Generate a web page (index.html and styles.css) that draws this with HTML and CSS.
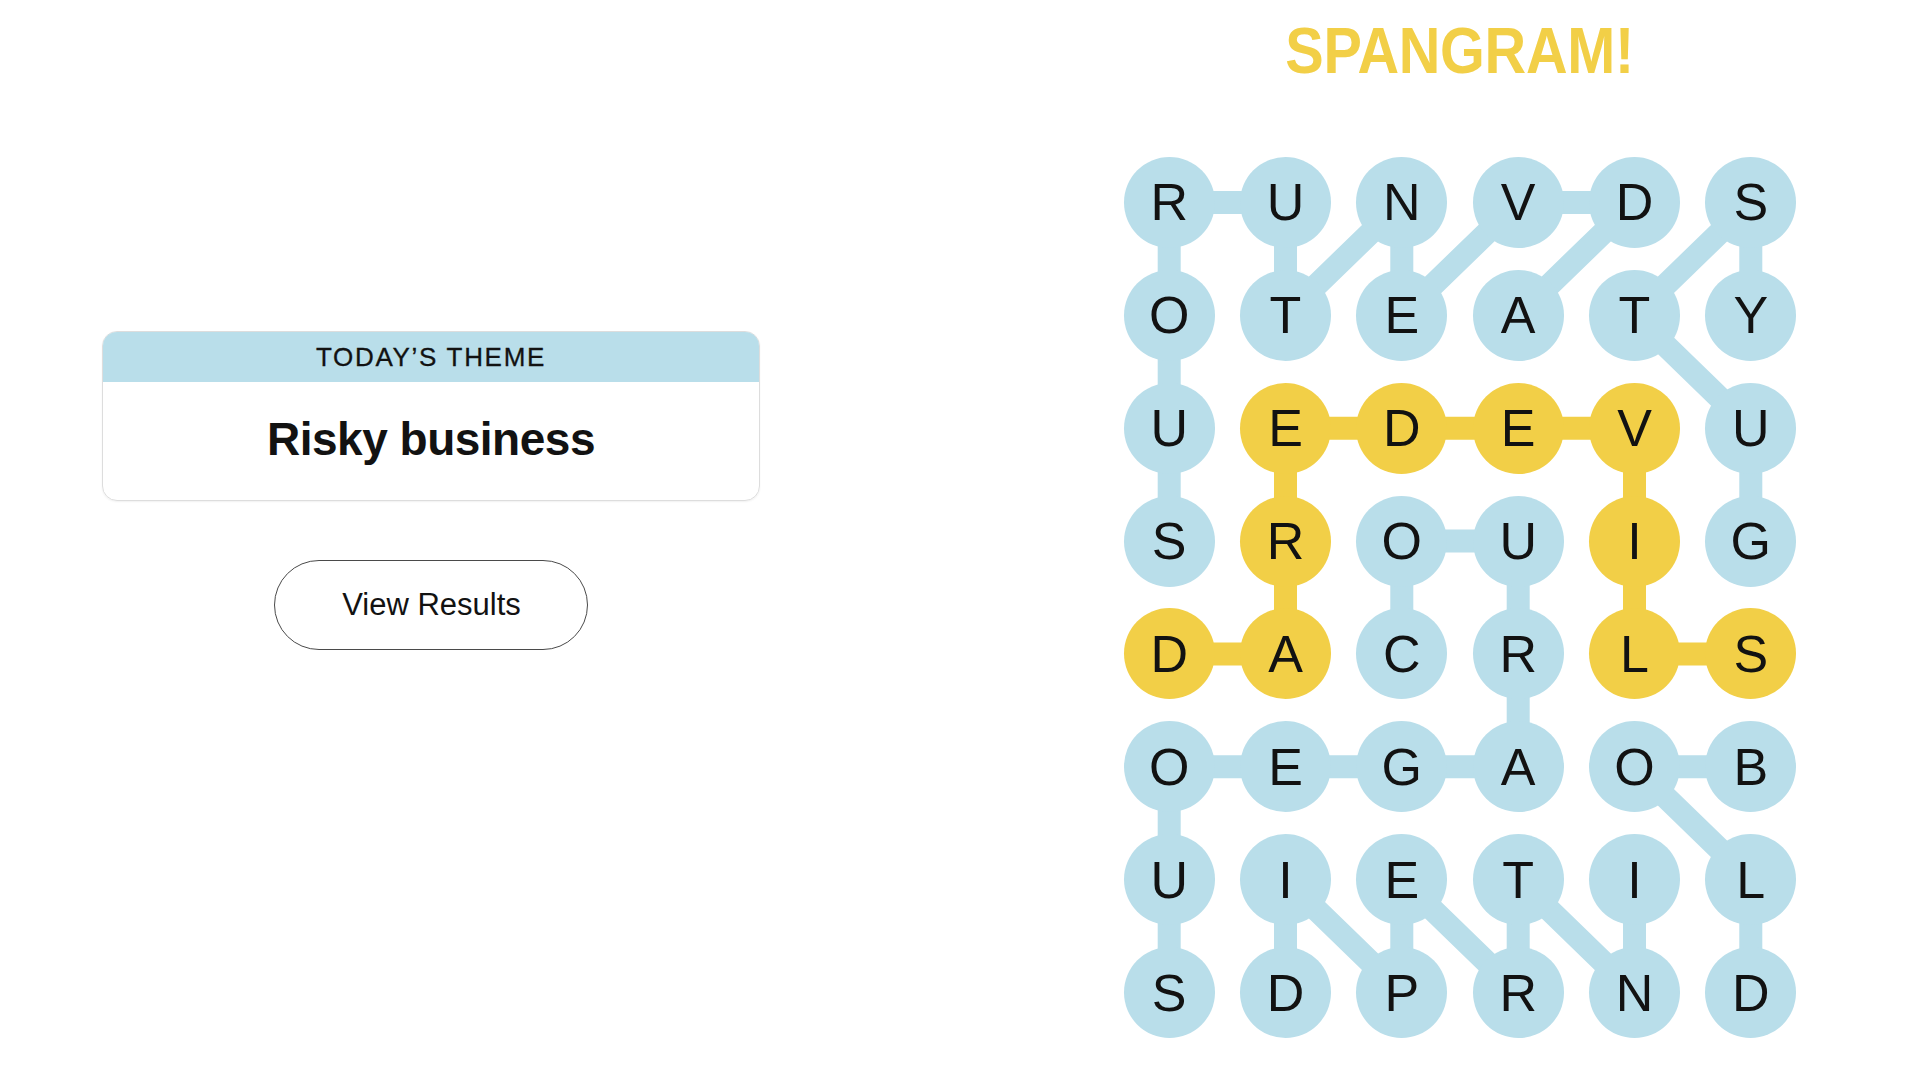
FILE: index.html
```html
<!DOCTYPE html>
<html lang="en">
<head>
<meta charset="utf-8">
<title>Strands</title>
<link rel="stylesheet" href="styles.css">
</head>
<body>
<main class="page">
  <section class="left">
    <div class="theme-card">
      <div class="theme-head">TODAY’S THEME</div>
      <div class="theme-body">Risky business</div>
    </div>
    <button class="results-btn">View Results</button>
  </section>
  <section class="right">
    <h1 class="spangram"><span>SPANGRAM!</span></h1>
    <div class="board">
      <svg class="links" width="698" height="903" viewBox="0 0 698 903" aria-hidden="true">
        <g stroke="#b9deea" stroke-width="23" fill="none">
          <!-- ADVENTUROUS -->
          <polyline points="407.2,169.3 523.5,56.4 407.2,56.4 290.8,169.3 290.8,56.4 174.5,169.3 174.5,56.4 58.2,56.4 58.2,169.3 58.2,282.2 58.2,395.1"/>
          <!-- GUTSY -->
          <polyline points="639.8,395.1 639.8,282.2 523.5,169.3 639.8,56.4 639.8,169.3"/>
          <!-- COURAGEOUS -->
          <polyline points="290.8,508.0 290.8,395.1 407.2,395.1 407.2,508.0 407.2,620.8 290.8,620.8 174.5,620.8 58.2,620.8 58.2,733.7 58.2,846.6"/>
          <!-- BOLD -->
          <polyline points="639.8,620.8 523.5,620.8 639.8,733.7 639.8,846.6"/>
          <!-- INTREPID -->
          <polyline points="523.5,733.7 523.5,846.6 407.2,733.7 407.2,846.6 290.8,733.7 290.8,846.6 174.5,733.7 174.5,846.6"/>
        </g>
        <g stroke="#f2cf47" stroke-width="23" fill="none">
          <!-- DAREDEVILS -->
          <polyline points="58.2,508.0 174.5,508.0 174.5,395.1 174.5,282.2 290.8,282.2 407.2,282.2 523.5,282.2 523.5,395.1 523.5,508.0 639.8,508.0"/>
        </g>
      </svg>
      <div class="cell"><span class="dot">R</span></div>
      <div class="cell"><span class="dot">U</span></div>
      <div class="cell"><span class="dot">N</span></div>
      <div class="cell"><span class="dot">V</span></div>
      <div class="cell"><span class="dot">D</span></div>
      <div class="cell"><span class="dot">S</span></div>

      <div class="cell"><span class="dot">O</span></div>
      <div class="cell"><span class="dot">T</span></div>
      <div class="cell"><span class="dot">E</span></div>
      <div class="cell"><span class="dot">A</span></div>
      <div class="cell"><span class="dot">T</span></div>
      <div class="cell"><span class="dot">Y</span></div>

      <div class="cell"><span class="dot">U</span></div>
      <div class="cell"><span class="dot gold">E</span></div>
      <div class="cell"><span class="dot gold">D</span></div>
      <div class="cell"><span class="dot gold">E</span></div>
      <div class="cell"><span class="dot gold">V</span></div>
      <div class="cell"><span class="dot">U</span></div>

      <div class="cell"><span class="dot">S</span></div>
      <div class="cell"><span class="dot gold">R</span></div>
      <div class="cell"><span class="dot">O</span></div>
      <div class="cell"><span class="dot">U</span></div>
      <div class="cell"><span class="dot gold">I</span></div>
      <div class="cell"><span class="dot">G</span></div>

      <div class="cell"><span class="dot gold">D</span></div>
      <div class="cell"><span class="dot gold">A</span></div>
      <div class="cell"><span class="dot">C</span></div>
      <div class="cell"><span class="dot">R</span></div>
      <div class="cell"><span class="dot gold">L</span></div>
      <div class="cell"><span class="dot gold">S</span></div>

      <div class="cell"><span class="dot">O</span></div>
      <div class="cell"><span class="dot">E</span></div>
      <div class="cell"><span class="dot">G</span></div>
      <div class="cell"><span class="dot">A</span></div>
      <div class="cell"><span class="dot">O</span></div>
      <div class="cell"><span class="dot">B</span></div>

      <div class="cell"><span class="dot">U</span></div>
      <div class="cell"><span class="dot">I</span></div>
      <div class="cell"><span class="dot">E</span></div>
      <div class="cell"><span class="dot">T</span></div>
      <div class="cell"><span class="dot">I</span></div>
      <div class="cell"><span class="dot">L</span></div>

      <div class="cell"><span class="dot">S</span></div>
      <div class="cell"><span class="dot">D</span></div>
      <div class="cell"><span class="dot">P</span></div>
      <div class="cell"><span class="dot">R</span></div>
      <div class="cell"><span class="dot">N</span></div>
      <div class="cell"><span class="dot">D</span></div>
    </div>
  </section>
</main>
</body>
</html>
```
FILE: styles.css
```css
html, body {
  margin: 0;
  padding: 0;
  background: #ffffff;
}

body {
  font-family: "Liberation Sans", Arial, sans-serif;
  color: #121212;
  width: 1920px;
  height: 1080px;
  overflow: hidden;
}

.page {
  display: flex;
  flex-direction: row;
  align-items: flex-start;
}

.left {
  margin-left: 102px;
  margin-top: 331px;
  width: 658px;
  display: flex;
  flex-direction: column;
  align-items: center;
}

.theme-card {
  box-sizing: border-box;
  width: 658px;
  height: 170px;
  border: 1px solid #dddddd;
  border-radius: 15px;
  overflow: hidden;
  display: flex;
  flex-direction: column;
  box-shadow: 0 1px 2px rgba(0, 0, 0, 0.06);
}

.theme-head {
  height: 50px;
  background: #b9deea;
  display: flex;
  align-items: center;
  justify-content: center;
  font-size: 26px;
  letter-spacing: 1.7px;
  color: #121212;
  padding-top: 1px;
  box-sizing: border-box;
  -webkit-text-stroke: 0.3px #121212;
}

.theme-body {
  flex: 1;
  display: flex;
  align-items: center;
  justify-content: center;
  font-size: 46px;
  font-weight: bold;
  letter-spacing: -0.5px;
  color: #121212;
  padding-bottom: 4px;
}

.results-btn {
  margin-top: 59px;
  box-sizing: border-box;
  width: 314px;
  height: 90px;
  border: 1.5px solid #4a4a4a;
  border-radius: 45px;
  background: #ffffff;
  font-family: "Liberation Sans", Arial, sans-serif;
  font-size: 31px;
  color: #121212;
  padding: 0 0 0 1px;
  cursor: pointer;
}

.right {
  margin-left: 351px;
  width: 698px;
  display: flex;
  flex-direction: column;
  align-items: center;
}

.spangram {
  margin: 19px 0 0 0;
  font-size: 64px;
  line-height: 64px;
  font-weight: bold;
  color: #f2cf47;
  letter-spacing: -0.3px;
}

.spangram span {
  display: inline-block;
  transform: scaleX(0.9);
}

.board {
  position: relative;
  margin-top: 63px;
  width: 698px;
  height: 903px;
  display: grid;
  grid-template-columns: repeat(6, 1fr);
  grid-template-rows: repeat(8, 1fr);
}

.links {
  position: absolute;
  left: 0;
  top: 0;
  z-index: 0;
}

.cell {
  position: relative;
  z-index: 1;
  display: flex;
  align-items: center;
  justify-content: center;
}

.dot {
  width: 91px;
  height: 91px;
  border-radius: 50%;
  background: #b9deea;
  display: flex;
  align-items: center;
  justify-content: center;
  font-size: 52px;
  line-height: 1;
  color: #121212;
}

.dot.gold {
  background: #f2cf47;
}
```
